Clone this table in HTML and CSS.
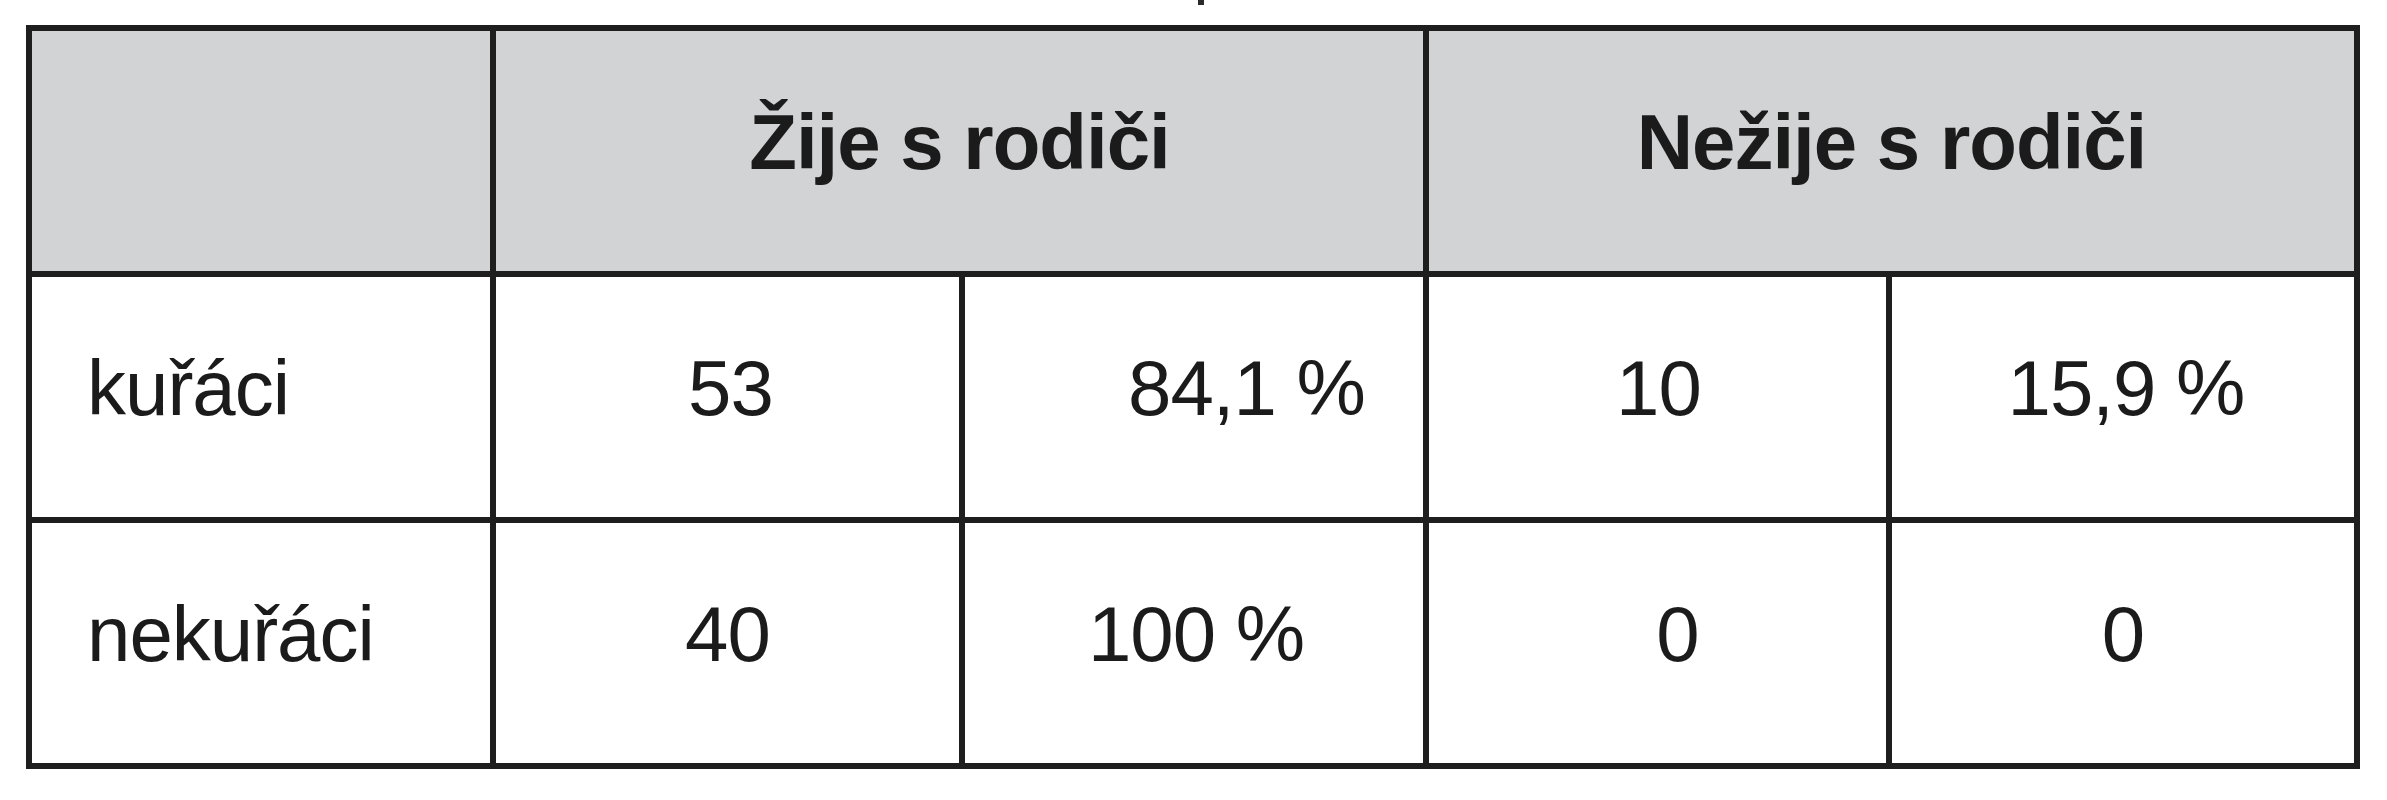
FILE: index.html
```html
<!DOCTYPE html>
<html lang="cs">
<head>
<meta charset="utf-8">
<title>Kuřáci a bydlení s rodiči</title>
<link rel="stylesheet" href="styles.css">
</head>
<body>
<div class="page">
  <div class="caption-strip"><span class="caption-mark"></span></div>
  <table class="data">
    <colgroup>
      <col class="c1"><col class="c2"><col class="c3"><col class="c4"><col class="c5">
    </colgroup>
    <thead>
      <tr>
        <th class="blank"></th>
        <th colspan="2">Žije s rodiči</th>
        <th colspan="2">Nežije s rodiči</th>
      </tr>
    </thead>
    <tbody>
      <tr>
        <td class="label">kuřáci</td>
        <td class="num off-3">53</td>
        <td class="num off-105">84,1 %</td>
        <td class="num off-2">10</td>
        <td class="num off-6">15,9 %</td>
      </tr>
      <tr>
        <td class="label">nekuřáci</td>
        <td class="num">40</td>
        <td class="num off-4">100 %</td>
        <td class="num off-40">0</td>
        <td class="num">0</td>
      </tr>
    </tbody>
  </table>
</div>
</body>
</html>
```

FILE: styles.css
```css
html, body {
  margin: 0;
  padding: 0;
  background: #ffffff;
}

.page {
  padding-left: 26px;
  font-family: "Liberation Sans", Arial, sans-serif;
  color: #1b1b1b;
}

.caption-strip {
  height: 25px;
  display: flex;
  align-items: flex-start;
  padding-left: 1172px;
}

.caption-mark {
  display: block;
  width: 6px;
  height: 5px;
  background: #2a2a2a;
}

.data {
  border-collapse: separate;
  border-spacing: 6px;
  background: #1e1e1e;
  table-layout: fixed;
  width: 2334px;
}

.c1 { width: 458px; }
.c2 { width: 463px; }
.c3 { width: 458px; }
.c4 { width: 457px; }
.c5 { width: 462px; }

.data tr {
  height: 240px;
}

.data th,
.data td {
  padding: 72px 0 0 0;
  vertical-align: top;
  font-size: 78px;
  line-height: 1;
  letter-spacing: -1px;
  white-space: nowrap;
}

.data th {
  background: #d2d3d5;
  font-weight: bold;
  text-align: center;
}

.data td {
  background: #ffffff;
  font-weight: normal;
}

.data td.label {
  text-align: left;
  padding-left: 55px;
}

.data td.num {
  text-align: center;
}

.data td.off-2 { padding-left: 2px; }
.data td.off-3 { padding-left: 6px; }
.data td.off-4 { padding-left: 4px; }
.data td.off-6 { padding-left: 6px; }
.data td.off-40 { padding-left: 40px; }
.data td.off-105 { padding-left: 105px; }
```
